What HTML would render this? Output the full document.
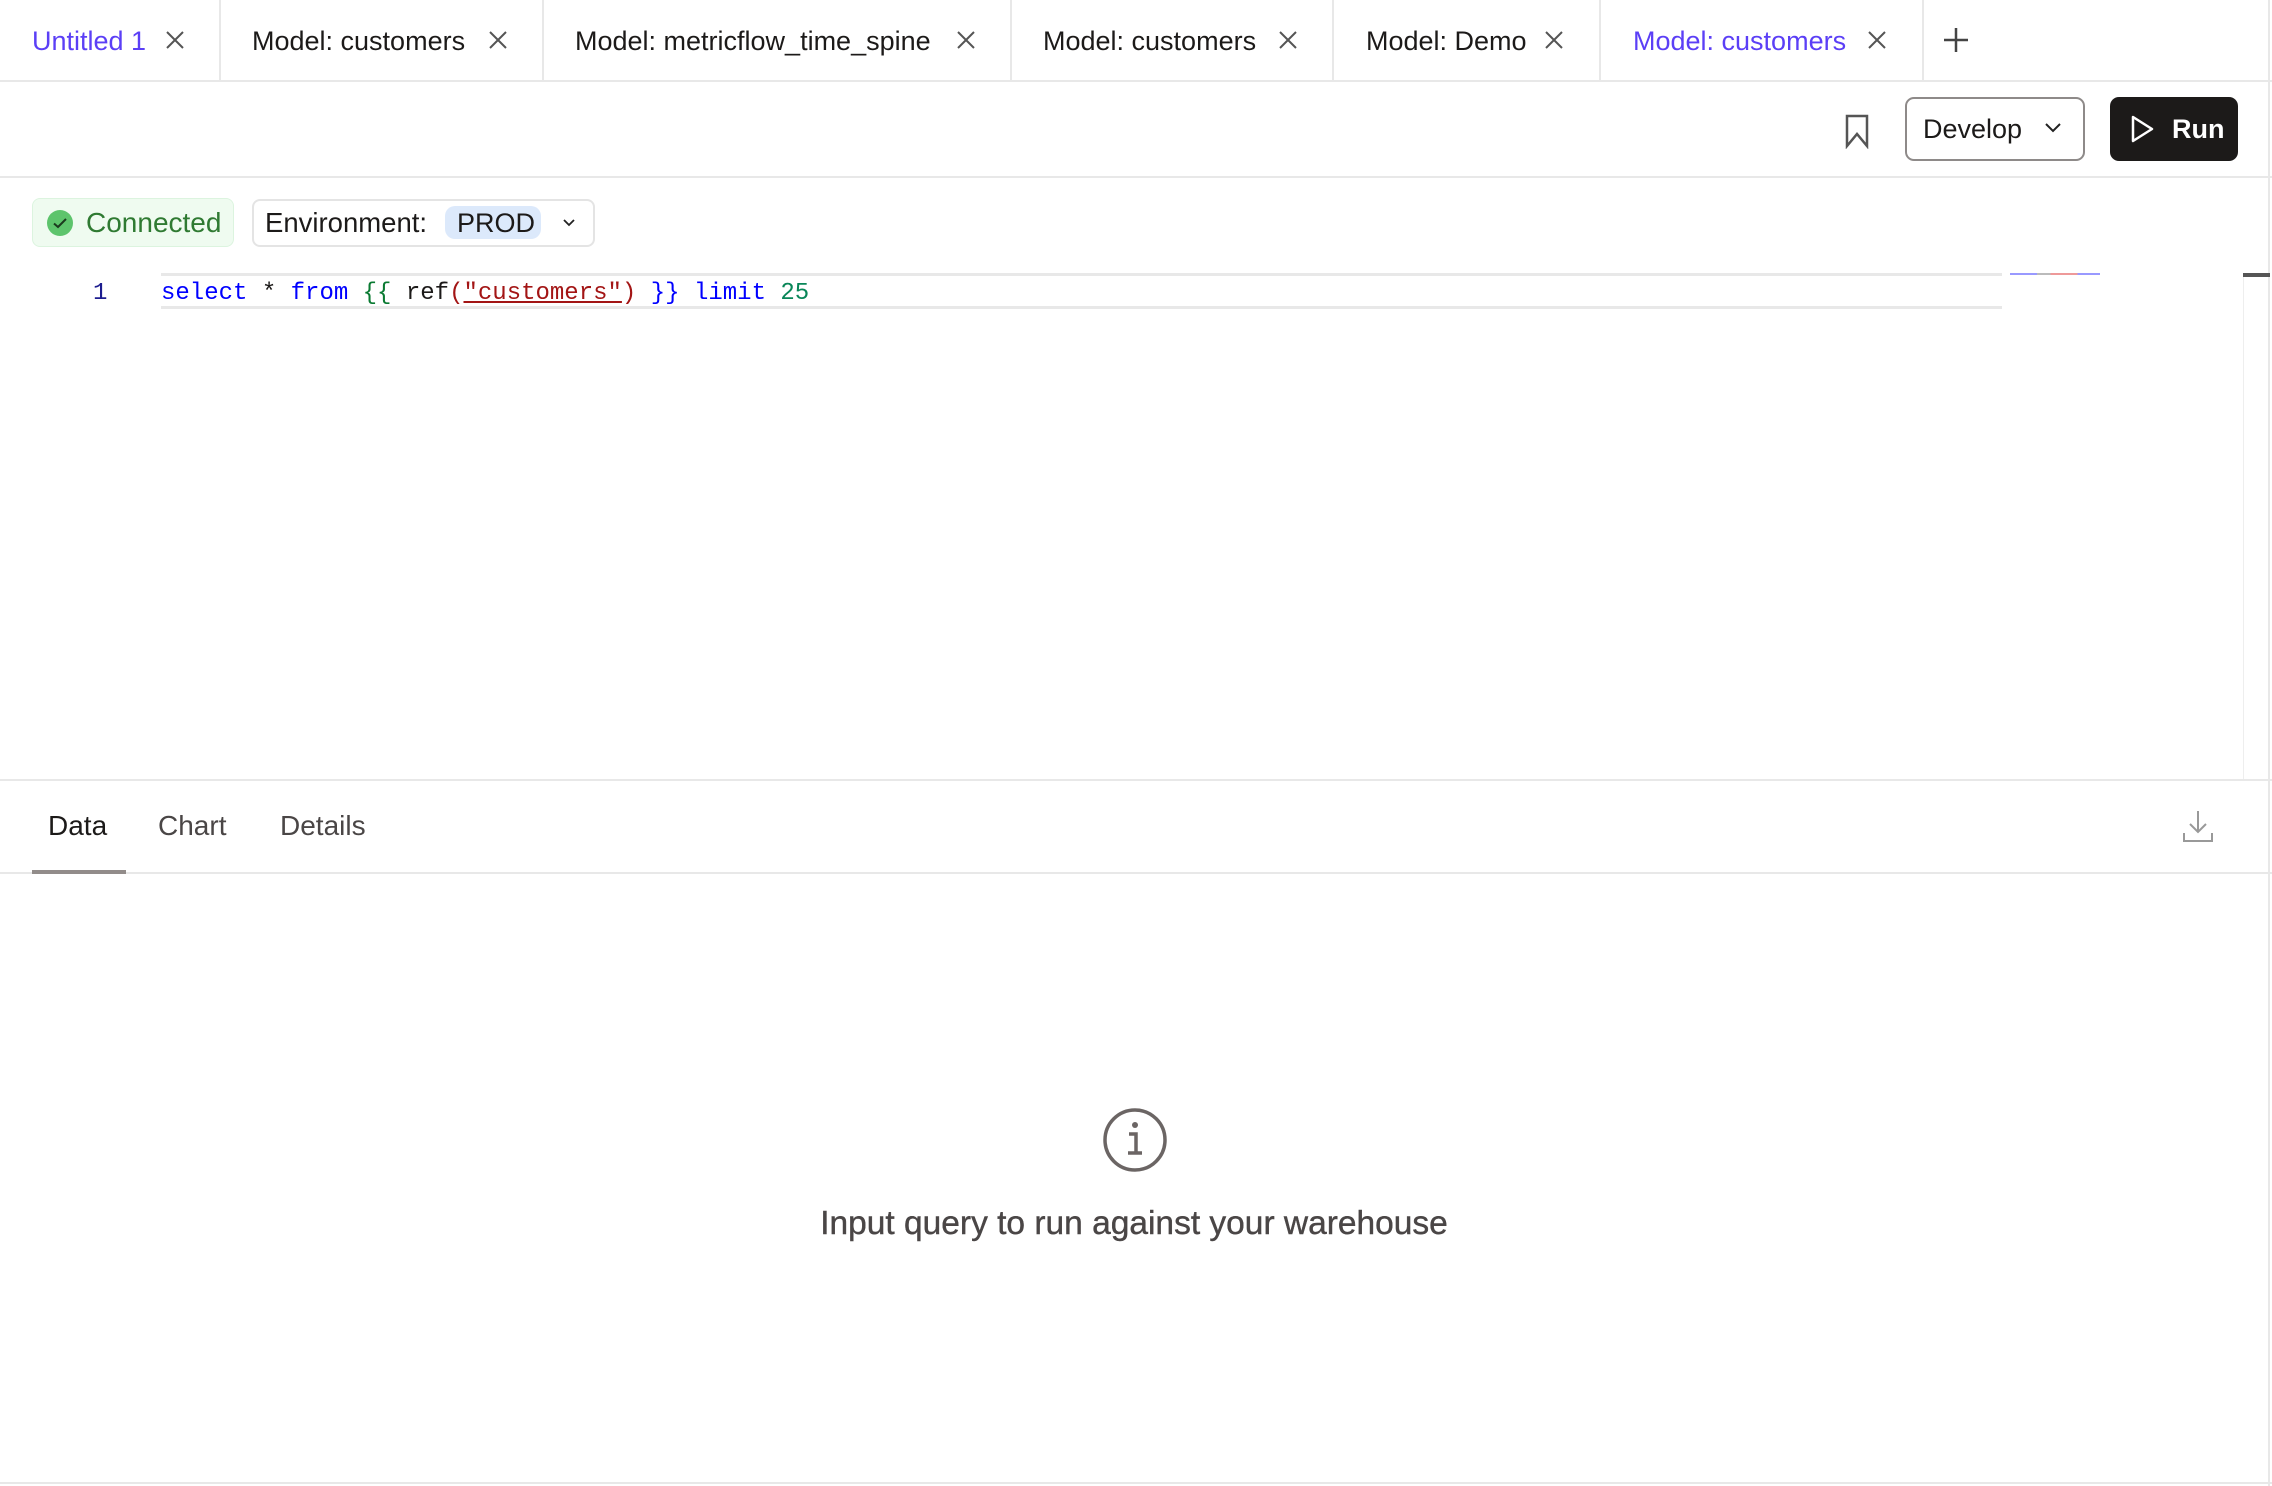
<!DOCTYPE html>
<html><head><meta charset="utf-8"><style>
*{margin:0;padding:0;box-sizing:border-box}
body{width:2272px;height:1486px;overflow:hidden;background:#fff;font-family:"Liberation Sans",sans-serif;color:#1c1a19;position:relative}
.a{position:absolute;white-space:nowrap}
.tab{font-size:27px;top:25px;line-height:32px}
.x{position:absolute;top:30px;width:20px;height:20px}
.sep{position:absolute;top:0;width:2px;height:81px;background:#e8e8e8}
.hl{position:absolute;height:2px;background:#e8e8e8}
.code{font-family:"Liberation Mono",monospace;font-size:24px;line-height:30px}
</style></head><body>
<div class="a tab" style="left:32px;color:#5b3ff6">Untitled 1</div>
<svg class="x" style="left:165px" viewBox="0 0 20 20"><path d="M2 2L18 18M18 2L2 18" stroke="#555" stroke-width="2"/></svg>
<div class="sep" style="left:219px"></div>
<div class="a tab" style="left:252px">Model: customers</div>
<svg class="x" style="left:488px" viewBox="0 0 20 20"><path d="M2 2L18 18M18 2L2 18" stroke="#555" stroke-width="2"/></svg>
<div class="sep" style="left:542px"></div>
<div class="a tab" style="left:575px">Model: metricflow_time_spine</div>
<svg class="x" style="left:956px" viewBox="0 0 20 20"><path d="M2 2L18 18M18 2L2 18" stroke="#555" stroke-width="2"/></svg>
<div class="sep" style="left:1010px"></div>
<div class="a tab" style="left:1043px">Model: customers</div>
<svg class="x" style="left:1278px" viewBox="0 0 20 20"><path d="M2 2L18 18M18 2L2 18" stroke="#555" stroke-width="2"/></svg>
<div class="sep" style="left:1332px"></div>
<div class="a tab" style="left:1366px">Model: Demo</div>
<svg class="x" style="left:1544px" viewBox="0 0 20 20"><path d="M2 2L18 18M18 2L2 18" stroke="#555" stroke-width="2"/></svg>
<div class="sep" style="left:1599px"></div>
<div class="a tab" style="left:1633px;color:#5b3ff6">Model: customers</div>
<svg class="x" style="left:1867px" viewBox="0 0 20 20"><path d="M2 2L18 18M18 2L2 18" stroke="#555" stroke-width="2"/></svg>
<div class="sep" style="left:1922px"></div>
<svg class="a" style="left:1943px;top:27px" width="26" height="26" viewBox="0 0 26 26"><path d="M13 1V25M1 13H25" stroke="#444" stroke-width="2.5"/></svg>
<div class="a" style="left:0;top:80px;width:2272px;height:2px;background:#e8e8e8"></div>
<svg class="a" style="left:1844px;top:113px" width="26" height="36" viewBox="0 0 26 36"><path d="M3 3H23V33L13 21L3 33Z" fill="none" stroke="#555" stroke-width="2.5"/></svg>
<div class="a" style="left:1905px;top:97px;width:180px;height:64px;border:2px solid #8e8a89;border-radius:9px"></div>
<div class="a" style="left:1923px;top:113px;font-size:27px;line-height:32px">Develop</div>
<svg class="a" style="left:2044px;top:122px" width="18" height="12" viewBox="0 0 18 12"><path d="M2 2L9 9L16 2" fill="none" stroke="#222" stroke-width="2"/></svg>
<div class="a" style="left:2110px;top:97px;width:128px;height:64px;background:#1c1a19;border-radius:9px"></div>
<svg class="a" style="left:2130px;top:114px" width="26" height="30" viewBox="0 0 26 30"><path d="M3 3L22 15L3 27Z" fill="none" stroke="#fff" stroke-width="2.5" stroke-linejoin="round"/></svg>
<div class="a" style="left:2172px;top:113px;font-size:27px;line-height:32px;color:#fff;font-weight:bold">Run</div>
<div class="a" style="left:0;top:176px;width:2272px;height:2px;background:#e8e8e8"></div>
<div class="a" style="left:2268px;top:0;width:2px;height:1486px;background:#e8e8e8"></div>
<div class="a" style="left:32px;top:198px;width:202px;height:49px;background:#effbf0;border:1.5px solid #dcf4df;border-radius:8px"></div>
<svg class="a" style="left:46px;top:209px" width="28" height="28" viewBox="0 0 28 28"><circle cx="14" cy="14" r="13" fill="#5dc46c"/><path d="M8 14.5L12 18L20 10" fill="none" stroke="#1b3a1e" stroke-width="2"/></svg>
<div class="a" style="left:86px;top:207px;font-size:28px;line-height:32px;color:#2f7a32">Connected</div>
<div class="a" style="left:252px;top:199px;width:343px;height:48px;border:2px solid #e4e4e4;border-radius:8px"></div>
<div class="a" style="left:265px;top:207px;font-size:27.5px;line-height:32px">Environment:</div>
<div class="a" style="left:445px;top:206px;width:96px;height:33px;background:#dce9fb;border-radius:10px"></div>
<div class="a" style="left:457px;top:207px;font-size:27px;line-height:32px">PROD</div>
<svg class="a" style="left:562px;top:218px" width="14" height="10" viewBox="0 0 14 10"><path d="M2 2L7 7L12 2" fill="none" stroke="#222" stroke-width="1.8"/></svg>
<div class="hl" style="left:161px;top:273px;width:1841px;height:3px"></div>
<div class="hl" style="left:161px;top:306px;width:1841px;height:3px"></div>
<div class="a code" style="left:93px;top:279px;color:#1d1d8f">1</div>
<div class="a code" style="left:161px;top:279px"><span style="color:#0000ff">select</span> * <span style="color:#0000ff">from</span> <span style="color:#0a7a32">{{</span> ref<span style="color:#a31515">(</span><span style="color:#a31515;text-decoration:underline">"customers"</span><span style="color:#a31515">)</span> <span style="color:#0000ff">}}</span> <span style="color:#0000ff">limit</span> <span style="color:#098658">25</span></div>
<div class="a" style="left:2010px;top:273px;width:90px;height:2px;background:linear-gradient(90deg,#99f 0 30%,#bbb 30% 45%,#e99 45% 75%,#99f 75%)"></div>
<div class="a" style="left:2243px;top:273px;width:27px;height:4px;background:#555"></div>
<div class="a" style="left:2243px;top:277px;width:1px;height:503px;background:#eee"></div>
<div class="a" style="left:0;top:779px;width:2272px;height:2px;background:#e8e8e8"></div>
<div class="a" style="left:48px;top:810px;font-size:28px;line-height:32px;color:#1c1a19">Data</div>
<div class="a" style="left:158px;top:810px;font-size:28px;line-height:32px;color:#4a4646">Chart</div>
<div class="a" style="left:280px;top:810px;font-size:28px;line-height:32px;color:#4a4646">Details</div>
<div class="a" style="left:0;top:872px;width:2272px;height:2px;background:#e8e8e8"></div>
<div class="a" style="left:32px;top:870px;width:94px;height:4px;background:#928c8a"></div>
<svg class="a" style="left:2181px;top:808px" width="34" height="36" viewBox="0 0 34 36"><path d="M17 3V24M9 16L17 24L25 16M3 25V33H31V25" fill="none" stroke="#999" stroke-width="2"/></svg>
<svg class="a" style="left:1102px;top:1107px" width="66" height="66" viewBox="0 0 66 66"><circle cx="33" cy="33" r="30" fill="none" stroke="#6b6564" stroke-width="3.5"/><circle cx="33" cy="18" r="3" fill="#6b6564"/><path d="M27 27H34V46M26 46H40" fill="none" stroke="#6b6564" stroke-width="3.5"/></svg>
<div class="a" style="left:0;top:1205px;width:2268px;text-align:center;font-size:33.5px;line-height:38px;color:#4a4646;-webkit-text-stroke:0.4px #4a4646">Input query to run against your warehouse</div>
<div class="a" style="left:0;top:1482px;width:2272px;height:2px;background:#e8e8e8"></div>
</body></html>
